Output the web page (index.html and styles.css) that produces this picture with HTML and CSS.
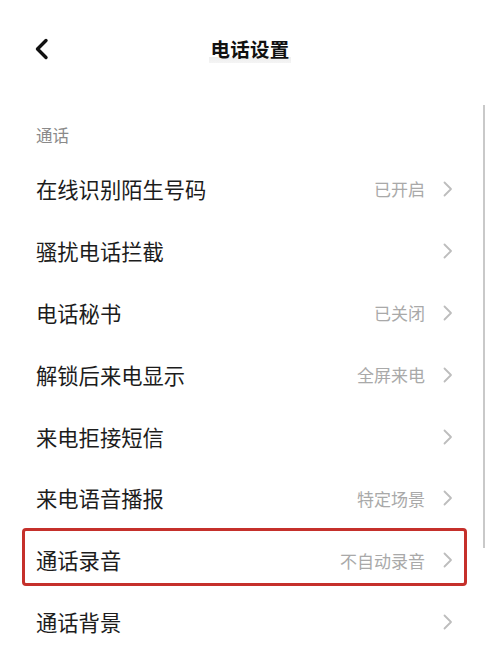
FILE: index.html
```html
<!DOCTYPE html>
<html lang="zh-CN">
<head>
<meta charset="utf-8">
<title>电话设置</title>
<link rel="stylesheet" href="styles.css">
</head>
<body>
<div class="screen">
  <header class="topbar">
    <svg class="back" width="16" height="22" viewBox="0 0 16 22"><path d="M12 2.5 L3.5 11 L12 19.5" fill="none" stroke="#111" stroke-width="3.4" stroke-linecap="round" stroke-linejoin="round"/></svg>
    <h1 class="title">电话设置</h1>
  </header>
  <div class="section">通话</div>
  <ul class="list">
    <li class="row"><span class="label">在线识别陌生号码</span><span class="value">已开启</span><svg class="chev" width="12" height="16" viewBox="0 0 12 16"><path d="M2.5 1.5 L9 8 L2.5 14.5" fill="none" stroke="#bdbdbd" stroke-width="1.8" stroke-linecap="round" stroke-linejoin="round"/></svg></li>
    <li class="row"><span class="label">骚扰电话拦截</span><span class="value"></span><svg class="chev" width="12" height="16" viewBox="0 0 12 16"><path d="M2.5 1.5 L9 8 L2.5 14.5" fill="none" stroke="#bdbdbd" stroke-width="1.8" stroke-linecap="round" stroke-linejoin="round"/></svg></li>
    <li class="row"><span class="label">电话秘书</span><span class="value">已关闭</span><svg class="chev" width="12" height="16" viewBox="0 0 12 16"><path d="M2.5 1.5 L9 8 L2.5 14.5" fill="none" stroke="#bdbdbd" stroke-width="1.8" stroke-linecap="round" stroke-linejoin="round"/></svg></li>
    <li class="row"><span class="label">解锁后来电显示</span><span class="value">全屏来电</span><svg class="chev" width="12" height="16" viewBox="0 0 12 16"><path d="M2.5 1.5 L9 8 L2.5 14.5" fill="none" stroke="#bdbdbd" stroke-width="1.8" stroke-linecap="round" stroke-linejoin="round"/></svg></li>
    <li class="row"><span class="label">来电拒接短信</span><span class="value"></span><svg class="chev" width="12" height="16" viewBox="0 0 12 16"><path d="M2.5 1.5 L9 8 L2.5 14.5" fill="none" stroke="#bdbdbd" stroke-width="1.8" stroke-linecap="round" stroke-linejoin="round"/></svg></li>
    <li class="row"><span class="label">来电语音播报</span><span class="value">特定场景</span><svg class="chev" width="12" height="16" viewBox="0 0 12 16"><path d="M2.5 1.5 L9 8 L2.5 14.5" fill="none" stroke="#bdbdbd" stroke-width="1.8" stroke-linecap="round" stroke-linejoin="round"/></svg></li>
    <li class="row"><span class="label">通话录音</span><span class="value">不自动录音</span><svg class="chev" width="12" height="16" viewBox="0 0 12 16"><path d="M2.5 1.5 L9 8 L2.5 14.5" fill="none" stroke="#bdbdbd" stroke-width="1.8" stroke-linecap="round" stroke-linejoin="round"/></svg></li>
    <li class="row"><span class="label">通话背景</span><span class="value"></span><svg class="chev" width="12" height="16" viewBox="0 0 12 16"><path d="M2.5 1.5 L9 8 L2.5 14.5" fill="none" stroke="#bdbdbd" stroke-width="1.8" stroke-linecap="round" stroke-linejoin="round"/></svg></li>
  </ul>
  <div class="highlight"></div>
  <div class="scrollbar"></div>
</div>
</body>
</html>
```
FILE: styles.css
```css
* { box-sizing: border-box; }
html, body { margin: 0; padding: 0; background: #fff; }
body {
  font-family: "Noto Sans CJK SC", "Noto Sans", sans-serif;
  color: #1c1c1c;
}
.screen {
  position: relative;
  width: 500px;
  height: 656px;
  overflow: hidden;
}
.topbar {
  position: relative;
  height: 100px;
  display: flex;
  align-items: flex-start;
  justify-content: center;
  padding-top: 35px;
}
.back {
  position: absolute;
  left: 34px;
  top: 38px;
}
.title {
  margin: 0;
  font-size: 19.5px;
  font-weight: 700;
  line-height: 28px;
  color: #111;
  letter-spacing: 0.3px;
  padding: 0 1px;
  background: linear-gradient(to bottom, #fff 0, #fff 80%, #efefef 80%, #f4f4f4 100%);
}
.section {
  height: 58px;
  padding: 24px 0 0 36px;
  font-size: 16.5px;
  line-height: 22px;
  color: #8a8a8a;
}
.list {
  list-style: none;
  margin: 0;
  padding: 0;
}
.row {
  height: 61.9px;
  display: flex;
  align-items: center;
  padding: 0 46px 0 36px;
}
.label {
  flex: 1;
  font-size: 21.3px;
  line-height: 28px;
  color: #1c1c1c;
}
.value {
  font-size: 17px;
  color: #a9a9a9;
  margin-right: 17px;
}
.chev { flex: none; }
.highlight {
  position: absolute;
  left: 22px;
  top: 528px;
  width: 445px;
  height: 58px;
  border: 3.5px solid #c5302b;
  border-radius: 4px;
}
.scrollbar {
  position: absolute;
  left: 483px;
  top: 105px;
  width: 2px;
  height: 443px;
  background: #c9c9c9;
}
```
